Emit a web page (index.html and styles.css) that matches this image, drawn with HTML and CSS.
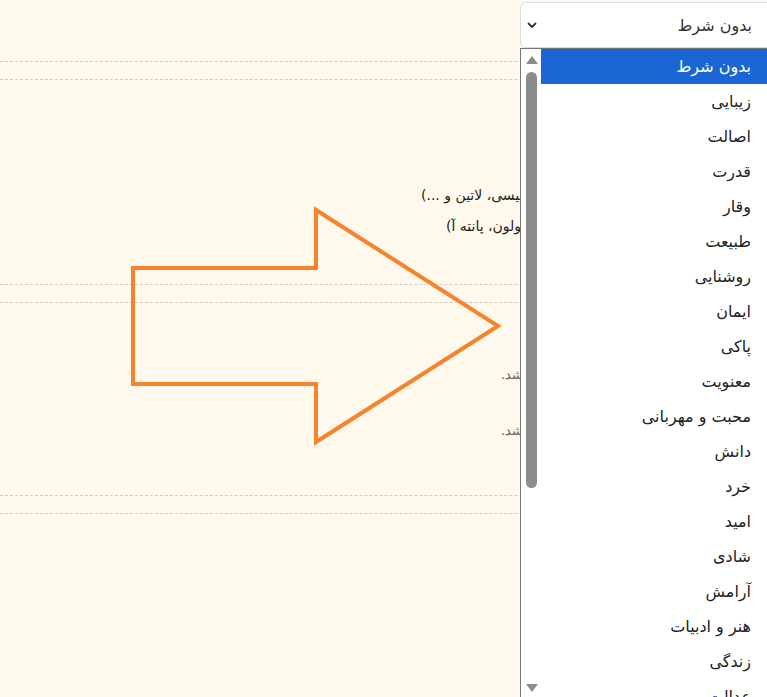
FILE: index.html
```html
<!DOCTYPE html>
<html lang="fa">
<head>
<meta charset="utf-8">
<title>انتخاب</title>
<link rel="stylesheet" href="styles.css">
</head>
<body>
<div class="page">
  <header class="top">
    <div class="select">
      <span class="select-text">بدون شرط</span>
      <svg class="chev" width="10" height="7" viewBox="0 0 10 7"><path d="M1.5 1.5 L5 5 L8.5 1.5" fill="none" stroke="#333" stroke-width="1.8" stroke-linecap="round" stroke-linejoin="round"/></svg>
    </div>
  </header>
  <section class="block block-a">
    <p class="line first"><span class="rtl">فارسی، عربی، انگلیسی، لاتین و ...)</span></p>
    <p class="line second"><span class="rtl">(مانند هرمس، آپولون، پانته آ)</span></p>
  </section>
  <section class="block block-b">
    <p class="note"><span class="rtl">این فیلد می‌تواند خالی باشد.</span></p>
    <p class="note"><span class="rtl">این فیلد هم می‌تواند خالی باشد.</span></p>
  </section>
  <section class="block block-c"></section>

  <svg class="arrow" width="767" height="697" viewBox="0 0 767 697">
    <polygon points="133,268 316,268 316,210 498,326 316,442 316,384 133,384" fill="none" stroke="#f7832c" stroke-width="4" stroke-linejoin="miter"/>
  </svg>

  <div class="dropdown">
    <div class="scrollbar">
      <span class="tri up"></span>
      <span class="thumb"></span>
      <span class="tri down"></span>
    </div>
    <ul class="options">
      <li class="opt active">بدون شرط</li>
      <li class="opt">زیبایی</li>
      <li class="opt">اصالت</li>
      <li class="opt">قدرت</li>
      <li class="opt">وقار</li>
      <li class="opt">طبیعت</li>
      <li class="opt">روشنایی</li>
      <li class="opt">ایمان</li>
      <li class="opt">پاکی</li>
      <li class="opt">معنویت</li>
      <li class="opt">محبت و مهربانی</li>
      <li class="opt">دانش</li>
      <li class="opt">خرد</li>
      <li class="opt">امید</li>
      <li class="opt">شادی</li>
      <li class="opt">آرامش</li>
      <li class="opt">هنر و ادبیات</li>
      <li class="opt">زندگی</li>
      <li class="opt">عدالت</li>
    </ul>
  </div>
</div>
</body>
</html>
```

FILE: styles.css
```css
* { box-sizing: border-box; }
html, body {
  margin: 0;
  padding: 0;
  background: #fff9ed;
  overflow: hidden;
}
body {
  font-family: "DejaVu Sans", "Noto Sans", sans-serif;
  color: #222;
}
.page {
  position: relative;
  width: 767px;
  height: 697px;
  overflow: hidden;
}
.top {
  height: 62px;
  border-bottom: 1px dashed #cfcbc4;
  display: flex;
  justify-content: flex-start;
  padding-top: 2px;
  padding-left: 520px;
}
.select {
  width: 262px;
  flex: none;
  height: 46px;
  background: #fff;
  border: 1px solid #dcdcdc;
  border-radius: 6px;
  display: flex;
  flex-direction: row-reverse;
  align-items: center;
  justify-content: space-between;
  padding: 0 29px 0 6px;
}
.select-text {
  font-size: 16px;
  color: #333;
  direction: rtl;
}
.chev { display: block; }
.block {
  margin-top: 17px;
  border-top: 1px dashed #cfcbc4;
  border-bottom: 1px dashed #cfcbc4;
}
.block-a {
  height: 206px;
  padding-top: 106px;
}
.line {
  margin: 0 0 13px 0;
  direction: ltr;
  white-space: nowrap;
  font-size: 14px;
  line-height: 18px;
  color: #222;
}
.line.first { padding-left: 421px; }
.line.second { padding-left: 446px; }
.rtl {
  direction: rtl;
  unicode-bidi: isolate;
}
.block-b {
  height: 194px;
  padding-top: 63px;
}
.note {
  margin: 0 0 38px 0;
  direction: ltr;
  padding-left: 501px;
  white-space: nowrap;
  font-family: "DejaVu Serif", serif;
  font-size: 13px;
  line-height: 18px;
  color: #666;
}
.block-c { height: 200px; border-bottom: none; }
.arrow {
  position: absolute;
  left: 0;
  top: 0;
  pointer-events: none;
}
.dropdown {
  position: absolute;
  left: 520px;
  top: 48px;
  width: 262px;
  height: 680px;
  background: #fff;
  border: 1px solid #767676;
  display: flex;
  flex-direction: row;
}
.scrollbar {
  position: relative;
  width: 20px;
  flex: none;
  background: #fff;
}
.tri {
  position: absolute;
  left: 5px;
  width: 0;
  height: 0;
  border-left: 6px solid transparent;
  border-right: 6px solid transparent;
}
.tri.up { top: 7px; border-bottom: 8px solid #8c8c8c; }
.tri.down { top: 635px; border-top: 8px solid #8c8c8c; }
.thumb {
  position: absolute;
  left: 5px;
  top: 23px;
  width: 11px;
  height: 416px;
  border-radius: 6px;
  background: #8c8c8c;
}
.options {
  list-style: none;
  margin: 0;
  padding: 0;
  flex: 1;
  direction: rtl;
}
.opt {
  height: 35px;
  line-height: 35px;
  padding-right: 30px;
  font-size: 16px;
  color: #222;
  white-space: nowrap;
}
.opt.active {
  background: #1a66d2;
  color: #fff;
}
```
